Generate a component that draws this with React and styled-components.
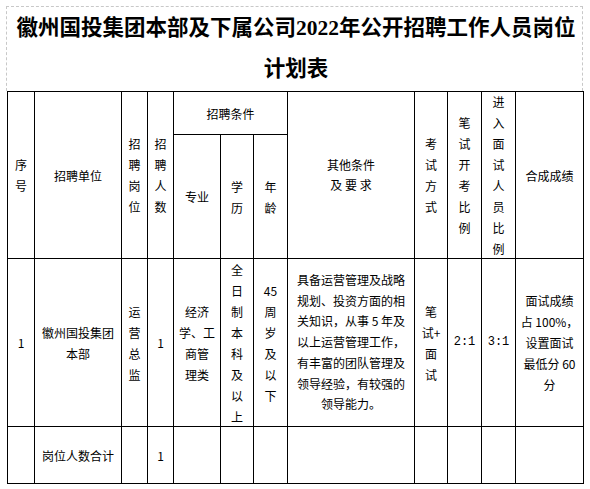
import React from 'react';
import styled, { createGlobalStyle } from 'styled-components';

const GlobalStyle = createGlobalStyle`
	body {
		margin: 0;
		background: #ffffff;
		font-family: 'Noto Sans CJK SC', 'DejaVu Sans', sans-serif;
		color: #000000;
	}
`;

// header cells, in grid auto-placement order
const headers = [
	{ lines: ['序', '号'], rs: 2 },
	{ lines: ['招聘单位'], rs: 2 },
	{ lines: ['招', '聘', '岗', '位'], rs: 2 },
	{ lines: ['招', '聘', '人', '数'], rs: 2 },
	{ lines: ['招聘条件'], cs: 3 },
	{ lines: ['其他条件', '及 要 求'], rs: 2, lh: 20 },
	{ lines: ['考', '试', '方', '式'], rs: 2 },
	{ lines: ['笔', '试', '开', '考', '比', '例'], rs: 2 },
	{ lines: ['进', '入', '面', '试', '人', '员', '比', '例'], rs: 2 },
	{ lines: ['合成成绩'], rs: 2 },
	{ lines: ['专业'] },
	{ lines: ['学', '历'] },
	{ lines: ['年', '龄'] },
];

const row = [
	{ lines: ['1'] },
	{ lines: ['徽州国投集团', '本部'] },
	{ lines: ['运', '营', '总', '监'] },
	{ lines: ['1'] },
	{ lines: ['经济', '学、工', '商管', '理类'] },
	{ lines: ['全', '日', '制', '本', '科', '及', '以', '上'] },
	{ lines: ['45', '周', '岁', '及', '以', '下'] },
	{
		lines: [
			'具备运营管理及战略',
			'规划、投资方面的相',
			'关知识，从事 5 年及',
			'以上运营管理工作，',
			'有丰富的团队管理及',
			'领导经验，有较强的',
			'领导能力。',
		],
		lh: 20.7,
	},
	{ lines: ['笔', '试+', '面', '试'] },
	{ lines: ['2:1'], mono: true },
	{ lines: ['3:1'], mono: true },
	{ lines: ['面试成绩', '占 100%，', '设置面试', '最低分 60', '分'] },
];

const total = [
	{ lines: [] },
	{ lines: ['岗位人数合计'] },
	{ lines: [] },
	{ lines: ['1'] },
	{ lines: [] },
	{ lines: [] },
	{ lines: [] },
	{ lines: [] },
	{ lines: [] },
	{ lines: [] },
	{ lines: [] },
	{ lines: [] },
];

const renderCell = (cell, i) => (
	<Cell key={i} $cs={cell.cs || 1} $rs={cell.rs || 1} $lh={cell.lh || 21} $mono={cell.mono}>
		<div>
			{cell.lines.map((line, j) => (
				<Line key={j}>{line}</Line>
			))}
		</div>
	</Cell>
);

export default function App() {
	return (
		<Page>
			<GlobalStyle />
			<TitleBox>
				<TitleLine>徽州国投集团本部及下属公司2022年公开招聘工作人员岗位</TitleLine>
				<TitleLine>计划表</TitleLine>
			</TitleBox>
			<Table>
				{headers.map(renderCell)}
				{row.map((c, i) => renderCell(c, 'r' + i))}
				{total.map((c, i) => renderCell(c, 't' + i))}
			</Table>
		</Page>
	);
}

const Page = styled.div`
	padding: 6px 0 0 6px;
`;

const TitleBox = styled.div`
	width: 575px;
	border: 1px dashed #c8c8c8;
	border-bottom: none;
	text-align: center;
	padding-top: 1px;
	box-sizing: content-box;
	height: 83px;
`;

const TitleLine = styled.div`
	font-family: 'Liberation Serif', 'Noto Sans CJK SC', serif;
	font-weight: bold;
	font-size: 21.5px;
	line-height: 41px;
	white-space: nowrap;
	padding-left: 3px;
`;

const Table = styled.div`
	display: grid;
	grid-template-columns: 26px 86px 25px 25px 46px 32px 33px 126px 32px 33px 33px 67px;
	grid-template-rows: 42px 123px 167px 56px;
	gap: 1px;
	padding: 1px;
	background: #000000;
	width: max-content;
	margin-left: 1px;
`;

const Cell = styled.div`
	grid-column: span ${(p) => p.$cs};
	grid-row: span ${(p) => p.$rs};
	background: #ffffff;
	display: flex;
	align-items: center;
	justify-content: center;
	text-align: center;
	font-size: 12px;
	line-height: ${(p) => p.$lh}px;
	font-family: ${(p) => (p.$mono ? "'Liberation Mono', monospace" : "'Noto Sans CJK SC', sans-serif")};
	overflow: hidden;
`;

const Line = styled.div`
	white-space: pre;
`;
